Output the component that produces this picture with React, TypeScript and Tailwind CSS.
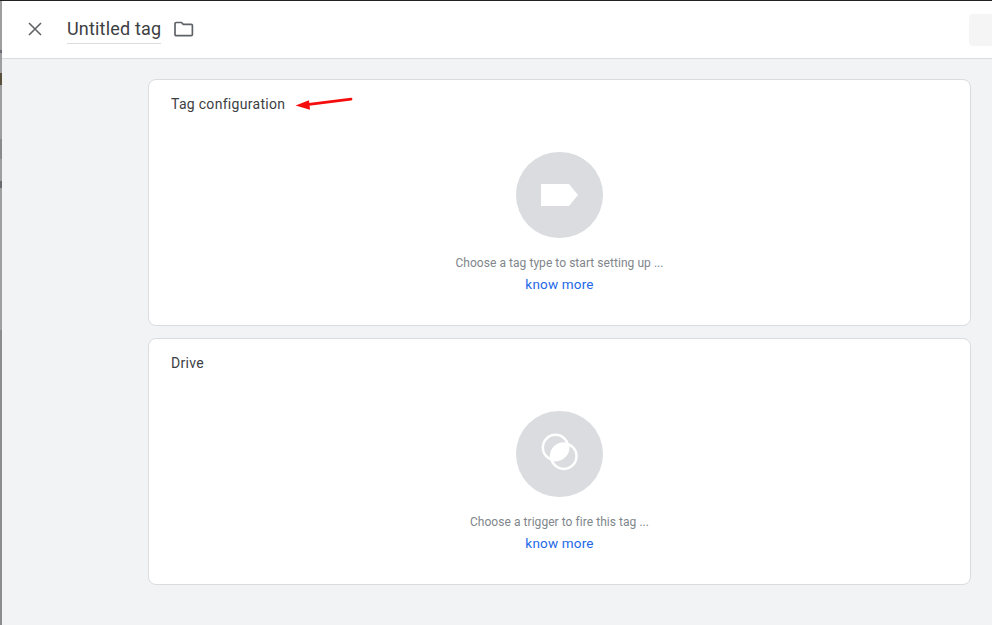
import { ReactNode } from "react";

const FONT = "font-['Roboto',sans-serif]";

function Card({ title, hint, icon, arrow }: { title: string; hint: string; icon: ReactNode; arrow?: boolean }) {
  return (
    <section className="relative h-[247px] rounded-lg border border-[#dadce0] bg-white pl-[22px] pt-[15px]">
      <h2 className="text-[14px] leading-[18px] tracking-[0.3px] text-[#3c4043]">{title}</h2>
      {arrow && (
        <svg className="absolute left-[145px] top-[15px]" width="60" height="18" viewBox="0 0 60 18">
          <path d="M57 4.2 L13 9.6" stroke="#f50d0d" strokeWidth="2.8" strokeLinecap="round" fill="none" />
          <path d="M1.5 10.5 L15 5.2 L16 14.8 Z" fill="#f50d0d" />
        </svg>
      )}
      <div className="mt-[39px] flex flex-col items-center pr-[22px]">
        <div className="flex h-[86px] w-[87px] items-center justify-center rounded-full bg-[#dadce0]">{icon}</div>
        <p className="mt-[17px] text-[12px] leading-[16px] tracking-[0.05px] text-[#80868b]">{hint}</p>
        <a className="mt-[5px] text-[13.5px] font-normal leading-[16px] tracking-[0.18px] text-[#2468e8]">know more</a>
      </div>
    </section>
  );
}

export default function App() {
  return (
    <div className={`flex h-[625px] w-[992px] overflow-hidden bg-[#f1f3f4] ${FONT}`}>
      {/* sliver of the page behind the panel */}
      <div className="flex w-[2px] shrink-0 flex-col bg-[#9e9e9e]">
        <div className="h-px shrink-0 bg-[#222222]" />
        <div className="mt-[49px] h-[3px] shrink-0 bg-[#6b6f75]" />
        <div className="mt-[20px] h-[12px] shrink-0 bg-[#5a4f3c]" />
        <div className="mt-[54px] h-[20px] shrink-0 bg-[#8a8a8a]" />
        <div className="mt-[22px] h-[7px] shrink-0 bg-[#6b6a70]" />
        <div className="mt-[142px] flex-1 bg-[#8c8c8c]" />
      </div>
      <div className="flex min-w-0 flex-1 flex-col">
        <header className="flex h-[59px] shrink-0 items-center border-t border-b border-t-[#222222] border-b-[#dadce0] bg-white">
          <button className="mb-[2px] ml-[24px] flex h-[18px] w-[18px] items-center justify-center">
            <svg width="14" height="14" viewBox="0 0 14 14">
              <path d="M1 1 L13 13 M13 1 L1 13" stroke="#5f6368" strokeWidth="1.6" fill="none" />
            </svg>
          </button>
          <h1 className="ml-[23px] border-b border-[#dadce0] pb-[1px] text-[18px] leading-[26px] tracking-[0.18px] text-[#3c4043]">Untitled tag</h1>
          <svg className="mb-[2px] ml-[13px]" width="20" height="16" viewBox="0 0 20 16">
            <path d="M2.2 1.5 H7.5 L9.3 3.4 H17.2 Q18.4 3.4 18.4 4.6 V13.4 Q18.4 14.6 17.2 14.6 H2.2 Q1 14.6 1 13.4 V2.7 Q1 1.5 2.2 1.5 Z" stroke="#5f6368" strokeWidth="1.7" fill="none" />
          </svg>
          <div className="ml-auto h-[32px] w-[23px] rounded-l bg-[#f5f5f5]" />
        </header>
        <main className="ml-[146px] mt-[20px] flex w-[823px] flex-col gap-[12px] self-start">
          <Card
            title="Tag configuration"
            hint="Choose a tag type to start setting up ..."
            arrow
            icon={
              <svg width="37" height="22" viewBox="0 0 37 22">
                <path d="M0 0 H28 L37 11 L28 22 H0 Z" fill="#ffffff" />
              </svg>
            }
          />
          <Card
            title="Drive"
            hint="Choose a trigger to fire this tag ..."
            icon={
              <svg width="38" height="38" viewBox="0 0 38 38" className="overflow-visible">
                <defs>
                  <clipPath id="lens">
                    <circle cx="14.5" cy="12.5" r="12.7" />
                  </clipPath>
                </defs>
                <circle cx="22.8" cy="21.2" r="12.7" fill="#ffffff" clipPath="url(#lens)" />
                <circle cx="14.5" cy="12.5" r="12.7" fill="none" stroke="#ffffff" strokeWidth="2.5" />
                <circle cx="22.8" cy="21.2" r="12.7" fill="none" stroke="#ffffff" strokeWidth="2.5" />
              </svg>
            }
          />
        </main>
      </div>
    </div>
  );
}
